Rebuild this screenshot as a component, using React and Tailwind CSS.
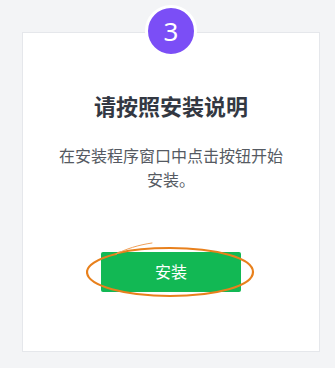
import React from "react";

export default function App() {
  return (
    <div
      className="w-[335px] h-[368px] bg-[#f3f4f6] pt-[32px] pl-[22px] pr-[15px]"
      style={{ fontFamily: '"Noto Sans", "Noto Sans CJK SC", sans-serif' }}
    >
      <div className="h-[320px] bg-white border border-[#e5e7eb] flex flex-col items-center">
        {/* step badge */}
        <div className="-mt-[28px] w-[52px] h-[52px] rounded-full bg-[#7b4ef6] border-[3px] border-white flex items-center justify-center text-white text-[26px] leading-none font-normal">
          3
        </div>

        <h2 className="mt-[34px] text-[22px] leading-[30px] font-bold text-[#333842]">
          请按照安装说明
        </h2>

        <p className="mt-[23px] w-[232px] text-center text-[16px] leading-[24px] text-[#555a62]">
          在安装程序窗口中点击按钮开始安装。
        </p>

        <div className="relative mt-[60px]">
          <button className="w-[140px] h-[40px] bg-[#12b854] rounded-[2px] text-white text-[16px]">
            安装
          </button>
          {/* hand-drawn highlight ellipse */}
          <svg
            className="absolute -left-[15px] -top-[10px] pointer-events-none"
            width="172"
            height="58"
            viewBox="0 0 172 58"
            fill="none"
          >
            <path
              d="M30 12 C10 17 1 24 1 30 C1 44 40 54 84 54 C130 54 167 44 167 30 C167 16 130 6 84 6 C62 6 44 8 32 11"
              stroke="#e8801c"
              strokeWidth="2.2"
              strokeLinecap="round"
            />
            <path
              d="M66 1 C52 3 40 7 30 12"
              stroke="#f0a15a"
              strokeWidth="1"
              strokeLinecap="round"
            />
          </svg>
        </div>
      </div>
    </div>
  );
}
